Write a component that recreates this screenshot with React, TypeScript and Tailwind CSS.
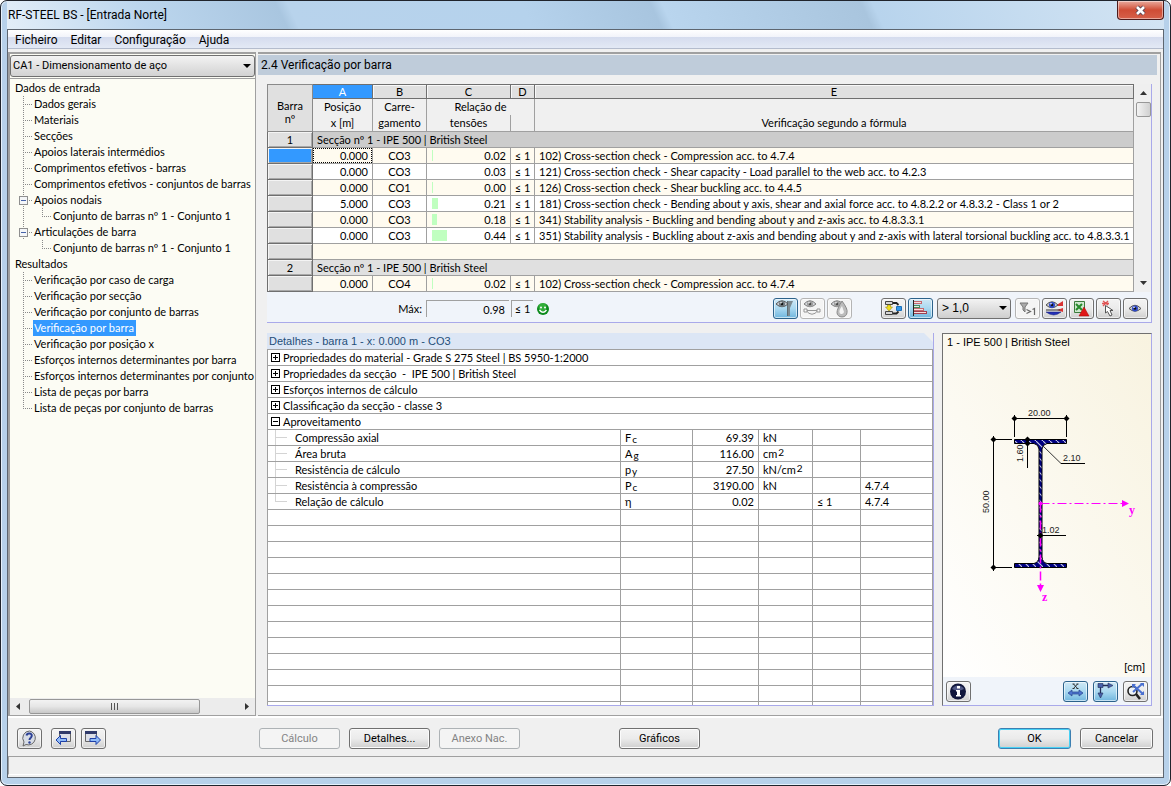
import React, { useState } from "react";

type TreeItem = { label: string; kind: "root" | "leaf" | "last" | "open" | "sub" | "subOpen"; };

const TREE: TreeItem[] = [
  { label: "Dados de entrada", kind: "root" },
  { label: "Dados gerais", kind: "leaf" },
  { label: "Materiais", kind: "leaf" },
  { label: "Secções", kind: "leaf" },
  { label: "Apoios laterais intermédios", kind: "leaf" },
  { label: "Comprimentos efetivos - barras", kind: "leaf" },
  { label: "Comprimentos efetivos - conjuntos de barras", kind: "leaf" },
  { label: "Apoios nodais", kind: "open" },
  { label: "Conjunto de barras nº 1 - Conjunto 1", kind: "subOpen" },
  { label: "Articulações de barra", kind: "open" },
  { label: "Conjunto de barras nº 1 - Conjunto 1", kind: "sub" },
  { label: "Resultados", kind: "root" },
  { label: "Verificação por caso de carga", kind: "leaf" },
  { label: "Verificação por secção", kind: "leaf" },
  { label: "Verificação por conjunto de barras", kind: "leaf" },
  { label: "Verificação por barra", kind: "leaf" },
  { label: "Verificação por posição x", kind: "leaf" },
  { label: "Esforços internos determinantes por barra", kind: "leaf" },
  { label: "Esforços internos determinantes por conjunto", kind: "leaf" },
  { label: "Lista de peças por barra", kind: "leaf" },
  { label: "Lista de peças por conjunto de barras", kind: "last" },
];

type CheckRow = { x: string; load: string; ratio: string; bar: number; text: string };

const CHECKS: CheckRow[] = [
  { x: "0.000", load: "CO3", ratio: "0.02", bar: 1, text: "102) Cross-section check - Compression acc. to 4.7.4" },
  { x: "0.000", load: "CO3", ratio: "0.03", bar: 0, text: "121) Cross-section check - Shear capacity - Load parallel to the web acc. to 4.2.3" },
  { x: "0.000", load: "CO1", ratio: "0.00", bar: 1, text: "126) Cross-section check - Shear buckling acc. to 4.4.5" },
  { x: "5.000", load: "CO3", ratio: "0.21", bar: 6, text: "181) Cross-section check - Bending about y axis, shear and axial force acc. to 4.8.2.2 or 4.8.3.2 - Class 1 or 2" },
  { x: "0.000", load: "CO3", ratio: "0.18", bar: 5, text: "341) Stability analysis - Buckling and bending about y and z-axis acc. to 4.8.3.3.1" },
  { x: "0.000", load: "CO3", ratio: "0.44", bar: 15, text: "351) Stability analysis - Buckling about z-axis and bending about y and z-axis with lateral torsional buckling acc. to 4.8.3.3.1" },
];

const GROUPS = [
  "Propriedades do material - Grade S 275 Steel | BS 5950-1:2000",
  "Propriedades da secção  -  IPE 500 | British Steel",
  "Esforços internos de cálculo",
  "Classificação da secção - classe 3",
];

type Detail = { name: string; sym: string; sub?: string; value: string; unit: string; sup?: string; limit: string; ref: string };

const DETAILS: Detail[] = [
  { name: "Compressão axial", sym: "F", sub: "c", value: "69.39", unit: "kN", limit: "", ref: "" },
  { name: "Área bruta", sym: "A", sub: "g", value: "116.00", unit: "cm", sup: "2", limit: "", ref: "" },
  { name: "Resistência de cálculo", sym: "p", sub: "y", value: "27.50", unit: "kN/cm", sup: "2", limit: "", ref: "" },
  { name: "Resistência à compressão", sym: "P", sub: "c", value: "3190.00", unit: "kN", limit: "", ref: "4.7.4" },
  { name: "Relação de cálculo", sym: "η", value: "0.02", unit: "", limit: "≤ 1", ref: "4.7.4" },
];

function Branch({ kind }: { kind: TreeItem["kind"] }) {
  const nested = kind === "sub" || kind === "subOpen";
  return (
    <svg width={nested ? 41 : 22} height="16" className="shrink-0" aria-hidden="true" shapeRendering="crispEdges">
      <g stroke="#8a8a8a" strokeDasharray="1 1" fill="none">
        {kind !== "sub" && <path d={kind === "last" ? "M12.500 0V8" : "M12.500 0V16"} />}
        {nested ? <path d="M31.500 0V8.500M31 8.500H41" /> : <path d="M12 8.500H22" />}
      </g>
      {kind === "open" && (
        <g>
          <rect x="8.500" y="4.500" width="8" height="8" rx="1" fill="#f4f6f8" stroke="#8f8f8f" />
          <path d="M10 8.500H15" stroke="#4663a8" />
        </g>
      )}
    </svg>
  );
}

function ToolButton({ label, active, faded, children }: { label: string; active?: boolean; faded?: boolean; children: React.ReactNode }) {
  const look = active
    ? "border-[#2c628b] bg-linear-to-b from-[#cfe8f5] via-[#a9d8f0] to-[#6fb6de]"
    : faded
      ? "border-[#b4b4b4] bg-[#f4f4f4]"
      : "border-[#707070] bg-linear-to-b from-[#f3f3f3] via-[#ebebeb] to-[#cfcfcf]";
  return (
    <button type="button" aria-label={label} className={"flex h-[21px] w-[25px] shrink-0 items-center justify-center rounded-[3px] border shadow-[inset_0_0_0_1px_rgba(255,255,255,0.6)] " + look}>
      <svg width="23" height="19" viewBox="0 0 23 19" aria-hidden="true">{children}</svg>
    </button>
  );
}

function PushButton({ children, wide, disabled, primary }: { children: React.ReactNode; wide?: boolean; disabled?: boolean; primary?: boolean }) {
  const look = disabled
    ? "border-[#adb2b5] bg-[#f4f4f4] text-[#838383]"
    : primary
      ? "border-[#3c7fb1] bg-linear-to-b from-[#f3f3f3] via-[#ebebeb] to-[#cfcfcf] shadow-[inset_0_0_0_1px_#48d1f5]"
      : "border-[#707070] bg-linear-to-b from-[#f3f3f3] via-[#ebebeb] to-[#cfcfcf] shadow-[inset_0_0_0_1px_#fbfbfb]";
  return (
    <button type="button" disabled={disabled} className={"h-[21px] shrink-0 rounded-[3px] border text-center leading-[19px] " + (wide ? "w-[81px] " : "w-[73px] ") + look}>
      {children}
    </button>
  );
}

function Eye({ x, y, color }: { x: number; y: number; color: string }) {
  return (
    <g transform={`translate(${x} ${y})`}>
      <path d="M-6 0Q0 -6.500 6 0Q0 5.500 -6 0Z" fill="#c9ccd2" stroke="#555" strokeWidth="1" />
      <circle r="3" fill={color} />
      <circle r="1.200" fill="#111" />
      <circle cx="-1" cy="-1.200" r=".8" fill="#fff" />
    </g>
  );
}

function GridHead({ children, selected }: { children?: React.ReactNode; selected?: boolean }) {
  return (
    <th scope="row" className={"border border-[#6f6f6f] p-0 text-center font-normal shadow-[inset_1px_1px_0_#f4f4f4,inset_-1px_-1px_0_#a8a8a8] " + (selected ? "bg-[#3399ff]" : "bg-[#e0e0e0]")}>
      {children}
    </th>
  );
}

function CheckLine({ row, tinted, selected }: { row: CheckRow; tinted: boolean; selected?: boolean }) {
  const cell = "border border-[#a0a0a0] p-0 ";
  return (
    <tr className={"h-4 " + (tinted ? "bg-[#fffbf0]" : "bg-white")}>
      <GridHead selected={selected} />
      <td className={cell + "text-right"}>
        <div className={"h-[15px] pr-1 " + (selected ? "outline-1 -outline-offset-1 outline-dotted outline-black" : "")}>{row.x}</div>
      </td>
      <td className={cell + "text-center"}>{row.load}</td>
      <td className={cell}>
        <div className="flex h-[15px] items-center justify-between pr-1 pl-[5px]">
          <span className="h-[11px] bg-[#c0ffc0]" style={{ width: row.bar }} />
          <span>{row.ratio}</span>
        </div>
      </td>
      <td className={cell + "text-center"}>≤ 1</td>
      <td className={cell + "pl-1 whitespace-nowrap"}>{row.text}</td>
    </tr>
  );
}

function SectionLine({ n, dark }: { n: number; dark?: boolean }) {
  return (
    <tr className="h-4">
      <GridHead>{n}</GridHead>
      <td colSpan={5} className={"border border-[#a0a0a0] p-0 pl-1 " + (dark ? "bg-[#cccccc]" : "bg-[#e0e0e0]")}>
        Secção nº 1 - IPE 500 | British Steel
      </td>
    </tr>
  );
}

function ChecksTable() {
  const letter = "border border-[#6f6f6f] p-0 text-center font-normal leading-[13px] ";
  return (
    <table className="w-full table-fixed border-collapse leading-[15px]">
      <colgroup>
        <col className="w-[45px]" />
        <col className="w-[60px]" />
        <col className="w-[54px]" />
        <col className="w-[84px]" />
        <col className="w-6" />
        <col />
      </colgroup>
      <thead>
        <tr className="h-[14px]">
          <th rowSpan={3} scope="col" className="border border-[#8a8a8a] bg-[#e0e0e0] p-0 pt-2 text-center leading-[13px] font-normal">Barra<br />nº</th>
          <th scope="col" className={letter + "bg-[#3399ff] text-white"}>A</th>
          {["B", "C", "D", "E"].map((c) => (
            <th key={c} scope="col" className={letter + "bg-[#e0e0e0] shadow-[inset_1px_1px_0_#f8f8f8]"}>{c}</th>
          ))}
        </tr>
        <tr className="h-4">
          <th className="border-x border-[#a0a0a0] p-0 font-normal">Posição</th>
          <th className="border-x border-[#a0a0a0] p-0 font-normal">Carre-</th>
          <th colSpan={2} className="border-x border-[#a0a0a0] p-0 font-normal">Relação de</th>
          <th className="border-x border-[#a0a0a0] p-0" />
        </tr>
        <tr className="h-[17px] align-top">
          <th className="border-x border-[#a0a0a0] p-0 font-normal">x [m]</th>
          <th className="border-x border-[#a0a0a0] p-0 font-normal">gamento</th>
          <th className="border-x border-[#a0a0a0] p-0 font-normal">tensões</th>
          <th className="border-x border-[#a0a0a0] p-0" />
          <th className="border-x border-[#a0a0a0] p-0 font-normal">Verificação segundo a fórmula</th>
        </tr>
      </thead>
      <tbody>
        <SectionLine n={1} dark />
        {CHECKS.map((row, i) => (
          <CheckLine key={row.text} row={row} tinted={i % 2 === 0} selected={i === 0} />
        ))}
        <tr className="h-4 bg-[#fffbf0]">
          <GridHead />
          <td colSpan={5} className="border border-[#a0a0a0] p-0" />
        </tr>
        <SectionLine n={2} />
        <CheckLine row={{ ...CHECKS[0], load: "CO4" }} tinted />
      </tbody>
    </table>
  );
}

function DetailsTable() {
  const cell = "border border-[#a0a0a0] p-0 ";
  return (
    <table className="w-full table-fixed border-collapse bg-white leading-[15px]">
      <colgroup>
        <col />
        <col className="w-[72px]" />
        <col className="w-[66px]" />
        <col className="w-[54px]" />
        <col className="w-12" />
        <col className="w-[72px]" />
      </colgroup>
      <tbody>
        {[...GROUPS, "Aproveitamento"].map((g, i) => (
          <tr key={g} className="h-4">
            <td colSpan={6} className={cell}>
              <div className="flex h-[15px] items-center gap-[3px] pl-[3px] whitespace-pre">
                <svg width="9" height="9" shapeRendering="crispEdges" aria-hidden="true">
                  <path d={i < 4 ? "M.5 .5H8.500V8.500H.5ZM2 4.500H7M4.500 2V7" : "M.5 .5H8.500V8.500H.5ZM2 4.500H7"} stroke="#000" fill="none" />
                </svg>
                {g}
              </div>
            </td>
          </tr>
        ))}
        {DETAILS.map((d, i) => (
          <tr key={d.name} className="h-4">
            <td className={cell}>
              <div className="flex h-[15px] gap-2">
                <svg width="19" height="15" shapeRendering="crispEdges" className="shrink-0" aria-hidden="true">
                  <path d={i === 4 ? "M7.500 0V7.500H19" : "M7.500 0V15M7.500 7.500H19"} stroke="#d4d4d4" fill="none" />
                </svg>
                {d.name}
              </div>
            </td>
            <td className={cell + "pl-1"}>
              <div className="h-[15px]">{d.sym}{d.sub && <span className="inline-block translate-y-px pl-px text-[10px] leading-3">{d.sub}</span>}</div>
            </td>
            <td className={cell + "pr-1 text-right"}>{d.value}</td>
            <td className={cell + "pl-1"}>
              <div className="h-[15px] whitespace-nowrap">{d.unit}{d.sup && <span className="inline-block -translate-y-0.5 pl-px text-[10px] leading-3">{d.sup}</span>}</div>
            </td>
            <td className={cell + "pl-1"}>{d.limit}</td>
            <td className={cell + "pl-1"}>{d.ref}</td>
          </tr>
        ))}
        {Array.from({ length: 13 }, (_, i) => (
          <tr key={i} className="h-4">
            {Array.from({ length: 6 }, (_, j) => (
              <td key={j} className={cell} />
            ))}
          </tr>
        ))}
      </tbody>
    </table>
  );
}

function Dot({ x, y }: { x: number; y: number }) {
  return <path d={`M${x - 3} ${y}L${x} ${y - 3}L${x + 3} ${y}L${x} ${y + 3}Z`} fill="#000" />;
}

function SectionDrawing() {
  return (
    <svg width="200" height="210" viewBox="943 400 200 210" className="block font-['Liberation_Sans',sans-serif]" role="img" aria-label="IPE 500">
      <defs>
        <pattern id="hatch" width="7" height="7" patternUnits="userSpaceOnUse">
          <rect width="7" height="7" fill="#000080" />
          <path d="M0 0L7 7" stroke="#c9cbe8" strokeWidth="1.100" />
        </pattern>
      </defs>
      <path d="M1014.500 439.500H1066.500V443.500H1047Q1042.500 444.500 1042 449V557Q1042.500 562.500 1047 563.500H1066.500V567.500H1014.500V563.500H1034Q1038.500 562.500 1039 557V449Q1038.500 444.500 1034 443.500H1014.500Z" fill="url(#hatch)" stroke="#000" />
      <g stroke="#000" fill="none" shapeRendering="crispEdges">
        <path d="M1012 418.500H1069M1014.500 415V437M1066.500 415V437" />
        <path d="M991 439.500H1012M991 567.500H1012M993.500 436V571" />
        <path d="M1027.500 437V468M1061 463.500H1085M1037 535.500H1066" />
      </g>
      <path d="M1043 446L1061 463.500" stroke="#333" />
      <Dot x={1014.5} y={418.5} />
      <Dot x={1066.5} y={418.5} />
      <Dot x={993.5} y={439.5} />
      <Dot x={993.5} y={567.5} />
      <Dot x={1027.5} y={439.5} />
      <Dot x={1027.5} y={443.5} />
      <g stroke="#ff00ff" strokeDasharray="9 3 2 3">
        <path d="M1040.500 503.500H1122" />
        <path d="M1040.500 503.500V586" strokeWidth="1.500" />
      </g>
      <g fill="#ff00ff">
        <circle cx="1040.500" cy="503.500" r="2" />
        <path d="M1122 500V507L1129 503.500ZM1037 585H1044L1040.500 592Z" />
      </g>
      <Dot x={1040.5} y={535.5} />
      <g fontSize="9" fill="#222">
        <text x="1028" y="416">20.00</text>
        <text x="1063" y="461">2.10</text>
        <text x="1042" y="533">1.02</text>
        <text transform="translate(1023 462) rotate(-90)">1.60</text>
        <text transform="translate(989 513) rotate(-90)">50.00</text>
      </g>
      <g fontFamily="Liberation Serif, serif" fontSize="12" fontWeight="bold" fill="#ff00ff">
        <text x="1129" y="514">y</text>
        <text x="1042" y="601">z</text>
      </g>
    </svg>
  );
}

function ResultsToolbar() {
  return (
    <div className="flex h-[31px] items-center border-b border-[#a9a9ea] bg-[#f0f4fa] pt-[3px] pr-[3px]">
      <label htmlFor="max-ratio" className="w-[155px] shrink-0 pt-0.5 text-right">Máx:</label>
      <input id="max-ratio" readOnly value="0.98" className="ml-1 h-[17px] w-[83px] shrink-0 border-t border-l border-[#a0a0a0] bg-transparent pr-1 text-right outline-none" />
      <span className="ml-0.5 h-[17px] w-[22px] shrink-0 border-t border-l border-[#a0a0a0] text-center leading-4">≤ 1</span>
      <svg width="14" height="14" viewBox="0 0 14 14" className="ml-[3px] shrink-0" aria-hidden="true">
        <circle cx="7" cy="7" r="6" fill="#0c8a1c" />
        <circle cx="6.500" cy="5" r="4" fill="#4fc74f" opacity=".6" />
        <circle cx="5" cy="5.500" r="1" fill="#fff" />
        <circle cx="9" cy="5.500" r="1" fill="#fff" />
        <path d="M3.500 8Q7 12.500 10.500 8" stroke="#fff" strokeWidth="1.300" fill="none" />
      </svg>
      <div className="ml-auto flex items-center">
        <div className="mr-[29px] flex gap-0.5">
          <ToolButton label="Mostrar barra" active>
            <path d="M14 2H19L16 9V17H14Z" fill="#7d8b92" />
            <path d="M13.500 2V17" stroke="#5f6d74" />
            <Eye x={8} y={5} color="#6d787e" />
          </ToolButton>
          <ToolButton label="Mostrar apoios" faded>
            <g opacity=".75">
              <Eye x={9} y={5} color="#808080" />
              <path d="M3 11.500H19M5 11.500Q11 19 17 11.500" stroke="#777" fill="none" />
              <path d="M3 10H6V13H3ZM16 10H19V13H16Z" fill="#fff" stroke="#777" />
            </g>
          </ToolButton>
          <ToolButton label="Mostrar cores" faded>
            <g opacity=".75">
              <Eye x={9} y={5} color="#808080" />
              <path d="M14 2Q20 10 19 13.500A5 4.500 0 0 1 9 13.500Q9 10 14 2Z" fill="#aaa" stroke="#666" />
              <path d="M14 7Q10 12 12 14.500Q15 16 16 13Z" fill="#f4f4f4" />
            </g>
          </ToolButton>
        </div>
        <div className="flex gap-0.5">
          <ToolButton label="Dependências">
            <path d="M3.500 2.500H10.500V5.500H3.500ZM3.500 12.500H10.500V15.500H3.500Z" fill="#d6d6d6" stroke="#444" />
            <path d="M5.500 6H8.500V8H10.500L7 12L3.500 8H5.500Z" fill="#f1df1c" stroke="#8c7a00" strokeWidth=".5" />
            <path d="M11 4H14.500L16.500 6M11 14.500H14.500L16.500 12.500" stroke="#222" strokeWidth="1.800" fill="none" />
            <path d="M14.500 7.500H19.500V11.500H14.500Z" fill="#2f95e8" stroke="#1a6eb8" />
          </ToolButton>
          <ToolButton label="Barras de relação" active>
            <g shapeRendering="crispEdges" strokeWidth="1">
              <path d="M4.500 1V17" stroke="#222" />
              <path d="M5 2.500H12.500V4.500H5M5 6.500H10.500V8.500H5M5 9.500H14.500V11.500H5" stroke="#c46a70" fill="#f6dede" />
              <path d="M5 6.500H10.500V8.500H5" stroke="#4c8a60" fill="#dff2e0" />
              <path d="M5 12.500H17.500V14.500H5" stroke="#a04050" fill="#f6dede" />
            </g>
          </ToolButton>
        </div>
        <div className="relative mr-1 ml-1">
          <select aria-label="Filtro de relação" defaultValue="1" className="block h-[21px] w-[74px] appearance-none rounded-[3px] border border-[#707070] bg-linear-to-b from-[#f3f3f3] to-[#cfcfcf] pl-1 font-['Liberation_Sans',sans-serif] text-[12px] leading-[19px] outline-none">
            <option value="1">{"> 1,0"}</option>
          </select>
          <svg width="8" height="4" className="pointer-events-none absolute top-2 right-1" aria-hidden="true"><path d="M0 0H8L4 4Z" /></svg>
        </div>
        <div className="flex gap-0.5">
          <ToolButton label="Filtrar maiores que 1" faded>
            <path d="M4 4H12L9 8V13L7 11V8Z" fill="#aaa" stroke="#777" />
            <path d="M10.500 10.500L14.500 12.500L10.500 14.500M16.500 10.500L18.500 9.500V16" stroke="#666" strokeWidth="1.200" fill="none" />
          </ToolButton>
          <ToolButton label="Mostrar resultados">
            <path d="M12 7L20 2V7ZM14 11L20 9V13Z" fill="#d83232" />
            <path d="M3 13H18Q11 19 3 13Z" fill="#2431b8" stroke="#111a70" strokeWidth=".5" />
            <path d="M3 11H17" stroke="#333" />
            <Eye x={9} y={6} color="#2e49c8" />
          </ToolButton>
          <ToolButton label="Exportar para Excel">
            <path d="M4.500 2.500H14.500V13.500H4.500Z" fill="#cfe8cf" stroke="#3c7c3c" />
            <path d="M6 5L12 11M12 5L6 11" stroke="#278b2b" strokeWidth="2" />
            <path d="M14 8L19 17H9Z" fill="#df1717" stroke="#a00" strokeWidth=".5" />
          </ToolButton>
          <ToolButton label="Selecionar barra">
            <path d="M6 2L11 6M11 2L6 7M5 4.500H12" stroke="#e05555" strokeWidth="1.300" />
            <path d="M8.500 6.500V14L10.500 12.500L13 17L15 16L13 11.500H16Z" fill="#fff" stroke="#555" />
          </ToolButton>
          <ToolButton label="Modo de visualização">
            <Eye x={11} y={9.5} color="#2e49c8" />
          </ToolButton>
        </div>
      </div>
    </div>
  );
}

const UI = "font-['Roboto','Open_Sans',sans-serif] text-[11px] ";
const GRID = "font-['Lato','Liberation_Sans',sans-serif] text-[11px] ";

export default function App() {
  const [selected, setSelected] = useState(15);
  return (
    <div className={UI + "flex h-screen min-h-[600px] flex-col overflow-hidden rounded-[7px] border border-[#20242c] bg-[#b7d1ea] px-[6px] pb-[7px] text-black shadow-[inset_0_0_0_1px_#e6f1fb]"}>
      <header className="flex h-7 shrink-0 items-start justify-between bg-[linear-gradient(65deg,#e3eef8_0%,#bcd6ee_12%,#a9c6e0_24%,#b8d3ec_25%,#b5d2ec_45%,#a8c5df_56%,#b9d5ee_57%,#a9c5de_74%,#b8d4ed_75%,#d3e4f3_100%)]">
        <h1 className="pt-[6px] pl-px text-[12px] leading-4">RF-STEEL BS - [Entrada Norte]</h1>
        <button type="button" aria-label="Fechar" className="flex h-[19px] w-[47px] items-center justify-center rounded-b-[4px] border border-t-0 border-[#4c1b1b] bg-linear-to-b from-[#e8a99d] via-[#cf4c35] to-[#d6604a] shadow-[inset_0_0_0_1px_rgba(255,255,255,0.45)]">
          <svg width="13" height="11" viewBox="0 0 13 11" aria-hidden="true">
            <path d="M3 2L10 9M10 2L3 9" stroke="#5a4050" strokeWidth="4.500" />
            <path d="M3 2L10 9M10 2L3 9" stroke="#fff" strokeWidth="2.600" />
          </svg>
        </button>
      </header>

      <div className="flex min-h-0 flex-1 flex-col border border-[#5e6670] bg-[#f0f0f0]">
        <nav className="flex h-[19px] shrink-0 items-center gap-[13px] border-b border-[#b4bccd] bg-[linear-gradient(#ffffff_0%,#f2f4fa_38%,#d5dcee_40%,#e3e9f5_100%)] pt-0.5 pl-[7px] text-[12px]">
          {["Ficheiro", "Editar", "Configuração", "Ajuda"].map((m) => (
            <button key={m} type="button" className="leading-4">{m}</button>
          ))}
        </nav>

        <div className="mt-[3px] flex min-h-0 flex-1 gap-0.5 border-b-2 border-white">
          <aside className="flex w-[248px] shrink-0 flex-col border border-t-2 border-l-2 border-[#a0a0a0] bg-[#fcfcf4]">
            <div className="relative mt-px">
              <select aria-label="Caso de dimensionamento" defaultValue="ca1" className="block h-[22px] w-full appearance-none rounded-[3px] border border-[#707070] bg-linear-to-b from-[#f3f3f3] to-[#d2d2d2] pl-0.5 leading-5 outline-none">
                <option value="ca1">CA1 - Dimensionamento de aço</option>
              </select>
              <svg width="8" height="4" className="pointer-events-none absolute top-[9px] right-1" aria-hidden="true"><path d="M0 0H8L4 4Z" /></svg>
            </div>
            <ul className="mt-px min-h-0 flex-1 overflow-hidden border-t border-[#a0a0a0] pt-px font-['Lato','Liberation_Sans',sans-serif]">
              {TREE.map((item, i) => (
                <li key={i} className="flex h-4 items-center pl-px whitespace-nowrap">
                  {item.kind === "root" ? (
                    <span className="pl-1">{item.label}</span>
                  ) : (
                    <>
                      <Branch kind={item.kind} />
                      <button type="button" onClick={() => setSelected(i)} className={"h-4 px-px pr-0.5 text-left leading-4 " + (selected === i ? "bg-[#3399ff] text-white" : "")}>{item.label}</button>
                    </>
                  )}
                </li>
              ))}
            </ul>
            <div className="flex h-[17px] shrink-0 items-center bg-[#ececec] px-1.5">
              <svg width="4" height="7" aria-hidden="true"><path d="M4 0V7L0 3.500Z" fill="#333" /></svg>
              <div className="ml-[9px] flex h-[15px] w-[171px] items-center justify-center gap-0.5 rounded-[2px] border border-[#979797] bg-linear-to-b from-[#f3f3f3] via-[#e6e6e6] to-[#c8c8c8]">
                <span className="h-[7px] w-px bg-[#555]" />
                <span className="h-[7px] w-px bg-[#555]" />
                <span className="h-[7px] w-px bg-[#555]" />
              </div>
              <svg width="4" height="7" className="ml-auto" aria-hidden="true"><path d="M0 0V7L4 3.500Z" fill="#333" /></svg>
            </div>
          </aside>

          <main className="mr-0.5 flex min-w-0 flex-1 flex-col border-t-2 border-r border-b border-[#a0a0a0]">
            <h2 className="mt-px mr-[3px] h-5 shrink-0 bg-[#bfccda] pl-[3px] text-[12px] leading-5">2.4 Verificação por barra</h2>
            <div className="flex min-h-0 flex-1 flex-col pt-[9px] pr-2 pb-[9px] pl-[9px]">
              <section className={GRID + "border-r border-[#a9a9ea]"}>
                <div className="flex">
                  <div className="min-w-0 flex-1">
                    <ChecksTable />
                  </div>
                  <div className="ml-px flex w-4 shrink-0 flex-col items-center justify-between bg-[#efefef] py-[7px]">
                    <div className="flex flex-col items-center gap-[7px]">
                      <svg width="7" height="4" aria-hidden="true"><path d="M0 4H7L3.500 0Z" fill="#333" /></svg>
                      <div className="h-[15px] w-[15px] rounded-[2px] border border-[#979797] bg-linear-to-r from-[#f3f3f3] to-[#d0d0d0]" />
                    </div>
                    <svg width="7" height="4" aria-hidden="true"><path d="M0 0H7L3.500 4Z" fill="#333" /></svg>
                  </div>
                </div>
                <ResultsToolbar />
              </section>

              <div className="mt-[10px] flex min-h-0 flex-1 gap-2">
                <section className="flex min-w-0 flex-1 flex-col border-r border-b border-[#a9a9ea]">
                  <h3 className="h-4 shrink-0 bg-[#dce6f5] pl-0.5 font-['Liberation_Sans',sans-serif] text-[11px] leading-4 text-[#1f4e79] [clip-path:polygon(0_0,calc(100%-9px)_0,100%_9px,100%_100%,0_100%)]">Detalhes - barra 1 - x: 0.000 m - CO3</h3>
                  <div className={GRID + "min-h-0 flex-1 overflow-hidden"}>
                    <DetailsTable />
                  </div>
                </section>

                <section className="flex w-[210px] shrink-0 flex-col border border-[#a9a9ea] border-t-[#707070] border-l-[#707070] font-['Liberation_Sans',sans-serif] text-[11px]">
                  <div className="flex min-h-0 flex-1 flex-col bg-linear-to-tr from-white to-[#f8f3e0]">
                    <h3 className="pb-[50px] pl-1 leading-4">1 - IPE 500 | British Steel</h3>
                    <SectionDrawing />
                    <p className="mt-auto pr-1.5 pb-0.5 text-right leading-4">[cm]</p>
                  </div>
                  <div className="flex h-[28px] shrink-0 items-center justify-between bg-[#f0f4fa] px-[3px]">
                    <ToolButton label="Informação">
                      <circle cx="11" cy="9.500" r="8" fill="#10163c" />
                      <path d="M5 7A7 7 0 0 1 17 7Q11 10 5 7Z" fill="#7c86b8" opacity=".6" />
                      <path d="M10 4H13V6.500H10ZM9 8H13V13H14V14.500H9V13H10V9.500H9Z" fill="#fff" />
                    </ToolButton>
                    <div className="flex gap-[5px]">
                      <ToolButton label="Cotas" active>
                        <path d="M9.500 2L13.500 6.500M13.500 2L9.500 6.500M8.500 2H10.500M12.500 2H14.500M8.500 6.500H10.500M12.500 6.500H14.500" stroke="#222" strokeWidth=".9" />
                        <path d="M4 11L8 8V10H15V8L19 11L15 14V12H8V14Z" fill="#4d74cf" stroke="#27458c" strokeWidth=".7" />
                      </ToolButton>
                      <ToolButton label="Eixos" active>
                        <path d="M7 3.500H14M6.500 4V12" stroke="#222b55" strokeWidth="1.300" />
                        <path d="M4 1.500H9V5.500H4ZM14 1L19 3.500L14 6ZM4 11L6.500 16L9 11Z" fill="#4862ac" stroke="#222b55" strokeWidth=".6" />
                      </ToolButton>
                      <ToolButton label="Ver tudo">
                        <circle cx="8.500" cy="9" r="4.500" fill="#eef3f8" stroke="#222" strokeWidth="1.600" />
                        <path d="M12 12L16 17" stroke="#222" strokeWidth="2.600" />
                        <path d="M9 3L19 12M18 2L9 10" stroke="#4a70d0" strokeWidth="2" />
                        <path d="M16 1H20V5ZM20 9V13H16ZM8 2H12L8 6Z" fill="#4a70d0" />
                      </ToolButton>
                    </div>
                  </div>
                </section>
              </div>
            </div>
          </main>
        </div>

        <footer className="flex h-[39px] shrink-0 items-start justify-between border-b border-[#a0a0a0] pt-[10px] pr-[10px] pl-[9px]">
          <div className="flex items-center">
            <div className="mr-[9px] flex">
              <ToolButton label="Ajuda">
                <path d="M11.500 2A7 7 0 1 1 8 15.500L5 17L6 13A7 7 0 0 1 11.500 2Z" fill="#d8dde6" stroke="#666" />
                <path d="M8.500 6.500Q9 4 12 4.500Q15 5.500 13 8.500Q11.500 9.500 11.500 11" stroke="#2b3f95" strokeWidth="2" fill="none" />
                <circle cx="11.500" cy="13.500" r="1.200" fill="#2b3f95" />
              </ToolButton>
            </div>
            <div className="mr-[153px] flex gap-[5px]">
              <ToolButton label="Anterior">
                <path d="M7.500 2.500H18.500V12.500H7.500Z" fill="#dcdfe8" stroke="#666" />
                <path d="M7 2H19V5H7Z" fill="#303a6b" />
                <path d="M4 11L8.500 6.500V9.500H14.500V12.500H8.500V15.500Z" fill="#8fbaf8" stroke="#1d3fa8" />
              </ToolButton>
              <ToolButton label="Seguinte">
                <path d="M3.500 2.500H14.500V12.500H3.500Z" fill="#dcdfe8" stroke="#666" />
                <path d="M3 2H15V5H3Z" fill="#303a6b" />
                <path d="M18.500 11L14 6.500V9.500H8V12.500H14V15.500Z" fill="#8fbaf8" stroke="#1d3fa8" />
              </ToolButton>
            </div>
            <div className="mr-[99px] flex gap-[9px]">
              <PushButton wide disabled>Cálculo</PushButton>
              <PushButton wide>Detalhes...</PushButton>
              <PushButton wide disabled>Anexo Nac.</PushButton>
            </div>
            <PushButton wide>Gráficos</PushButton>
          </div>
          <div className="flex gap-[9px]">
            <PushButton primary>OK</PushButton>
            <PushButton>Cancelar</PushButton>
          </div>
        </footer>
        <div role="status" className="mb-0.5 h-[18px] shrink-0 border-b border-l border-white border-l-[#a0a0a0]" />
      </div>
    </div>
  );
}
